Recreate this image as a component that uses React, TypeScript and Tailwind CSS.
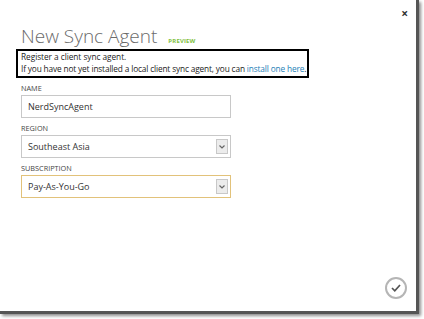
export default function App() {
    return (
        <div className="h-[319px] w-[424px] overflow-hidden bg-white" style={{ fontFamily: '"Open Sans", "Noto Sans", sans-serif' }}>
            <div className="relative h-[314px] w-[419px] border-b-[3px] border-r-[3px] border-[#555] bg-white shadow-[2px_2px_3px_rgba(0,0,0,0.45)]">
                <button className="absolute right-[8px] top-[8px] text-[12px] font-bold leading-none text-[#333]">×</button>

                <div className="pl-[21px] pt-[27px]">
                    <div className="flex items-baseline gap-[11px]">
                        <h1 className="text-[19px] font-light leading-none text-[#6a6a6a]">New Sync Agent</h1>
                        <span className="text-[6px] font-bold tracking-wide text-[#7fbf3f]">PREVIEW</span>
                    </div>
                </div>

                <div className="ml-[16px] mt-[3px] w-[293px] whitespace-nowrap border-2 border-black pb-[1px] pl-[3px] text-[8.3px] leading-[12px] text-[#222]">
                    <div className="tracking-[-0.05px]">Register a client sync agent.</div>
                    <div className="tracking-[-0.15px]">If you have not yet installed a local client sync agent, you can <span className="text-[#1f7fb8]">install one here</span>.</div>
                </div>

                <div className="ml-[21px] w-[210px]">
                    <Field label="NAME">
                        <div className="flex h-[23px] items-center border border-[#c8c8c8] px-[6px] text-[9px] text-[#333]">NerdSyncAgent</div>
                    </Field>
                    <Field label="REGION">
                        <SelectBox value="Southeast Asia" border="border-[#c8c8c8]" />
                    </Field>
                    <Field label="SUBSCRIPTION">
                        <SelectBox value="Pay-As-You-Go" border="border-[#e2c27a]" />
                    </Field>
                </div>

                <button className="absolute bottom-[12px] right-[9px] grid h-[22px] w-[22px] place-items-center rounded-full border-2 border-[#b5b5b5]">
                    <svg width="10" height="8" viewBox="0 0 10 8" fill="none">
                        <path d="M1 4 L3.8 6.8 L9 1" stroke="#555" strokeWidth="1.7" />
                    </svg>
                </button>
            </div>
        </div>
    );
}

function Field({ label, children }: { label: string; children: React.ReactNode }) {
    return (
        <div className="mt-[5px]">
            <div className="mb-[2px] text-[7.3px] leading-[10px] text-[#444]">{label}</div>
            {children}
        </div>
    );
}

function SelectBox({ value, border }: { value: string; border: string }) {
    return (
        <div className={`flex h-[23px] items-center justify-between border ${border} pl-[6px] pr-[2px] text-[9px] text-[#333]`}>
            <span>{value}</span>
            <span className="grid h-[15px] w-[12px] place-items-center border border-[#c8c8c8] bg-[#ececec]">
                <svg width="6" height="4" viewBox="0 0 6 4" fill="none">
                    <path d="M0.5 0.5 L3 3 L5.5 0.5" stroke="#666" strokeWidth="1.2" />
                </svg>
            </span>
        </div>
    );
}
